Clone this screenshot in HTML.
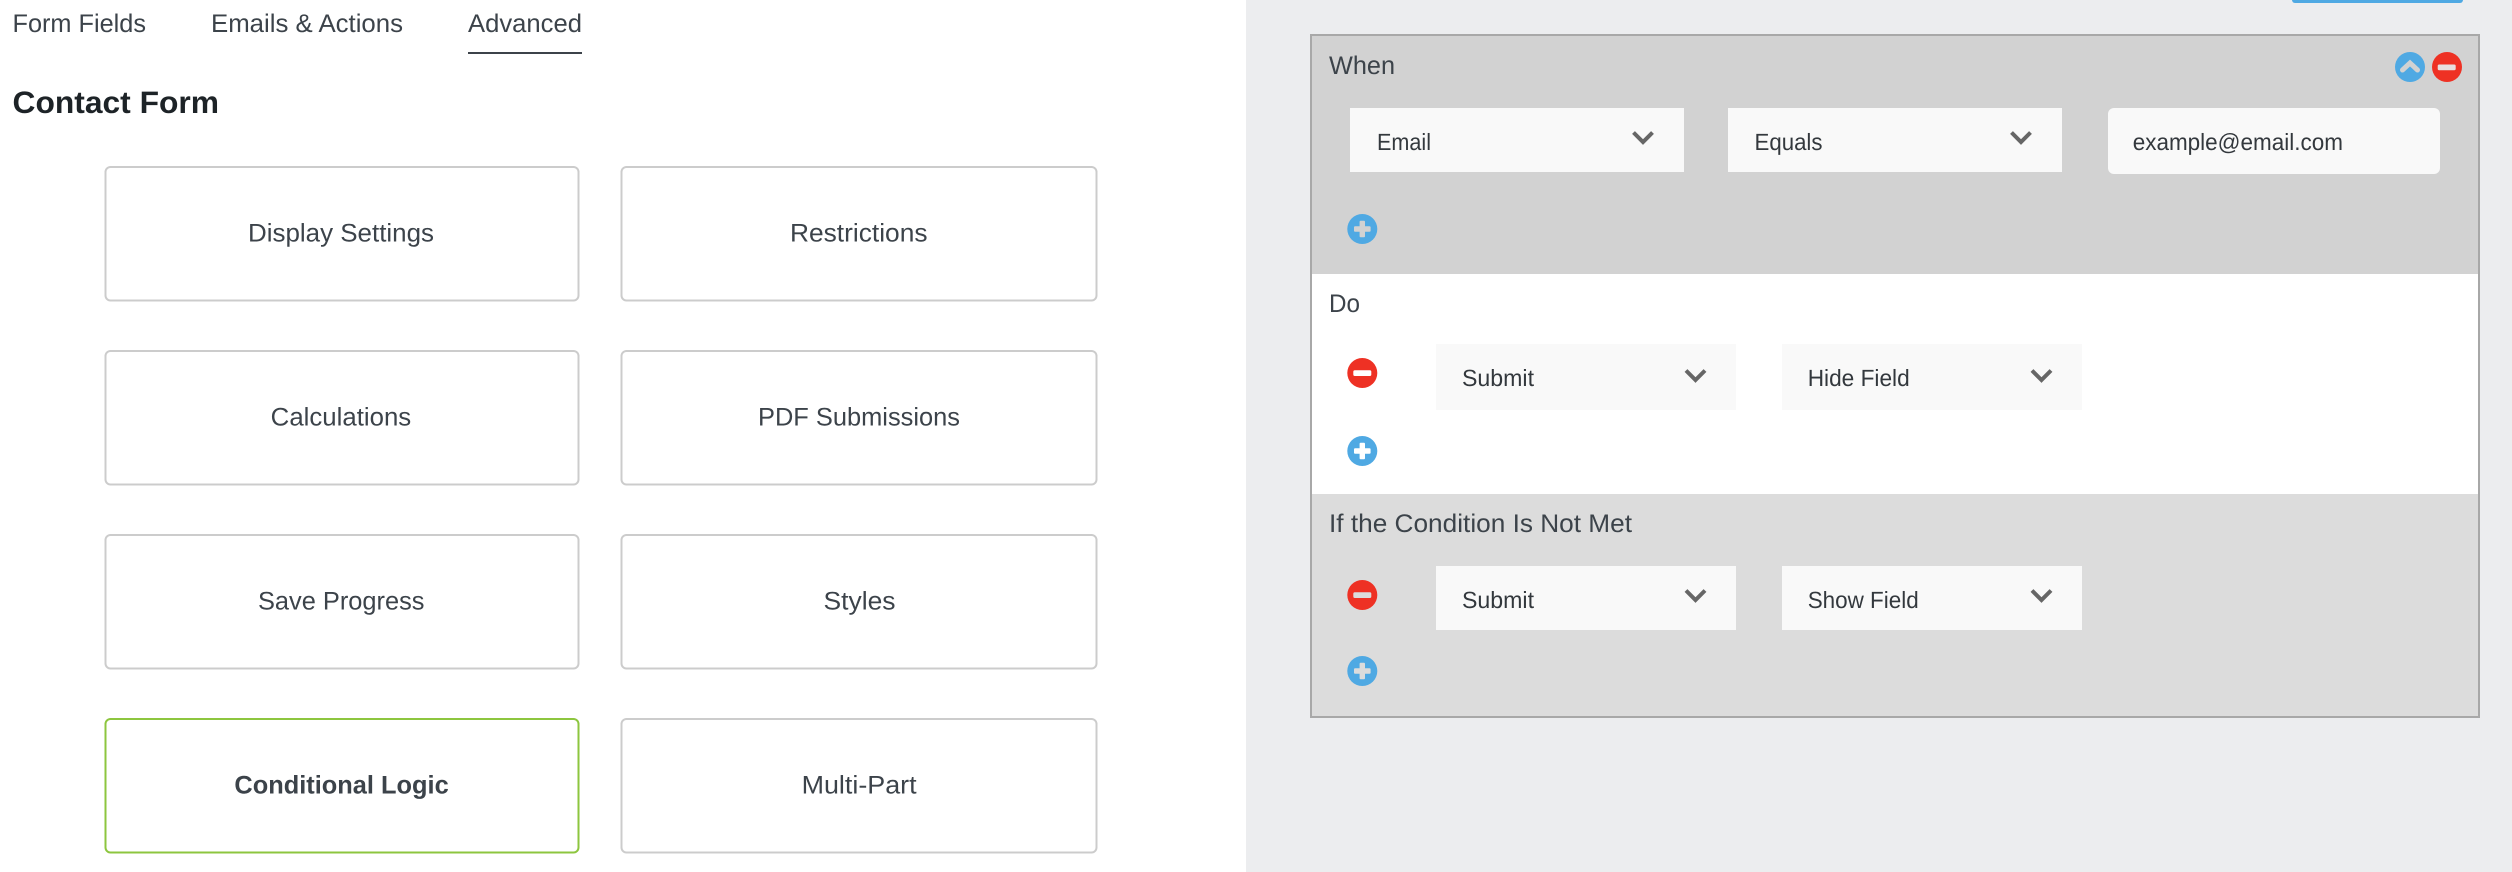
<!DOCTYPE html>
<html><head><meta charset="utf-8"><title>Contact Form</title>
<style>
html,body{margin:0;padding:0;width:2512px;height:872px;overflow:hidden;background:#fff}
svg{display:block}
text{font-family:"Liberation Sans",sans-serif;fill:#3c434a;font-size:25.500px;text-rendering:geometricPrecision}
.s{font-size:23.500px;fill:#33383d}
.c{fill:none;stroke:#666;stroke-width:4}
</style></head><body>
<svg xmlns="http://www.w3.org/2000/svg" width="2512" height="872" viewBox="0 0 2512 872">
<rect x="1246" y="0" width="1266" height="872" fill="#ecedef"/>
<path d="M2292 0h171v0a3 3 0 0 1-3 3h-165a3 3 0 0 1-3-3z" fill="#4fa9e3"/>

<text x="12.500" y="32" textLength="133.500" lengthAdjust="spacingAndGlyphs">Form Fields</text>
<text x="211" y="32" textLength="192" lengthAdjust="spacingAndGlyphs">Emails &amp; Actions</text>
<text x="468" y="32" textLength="114" lengthAdjust="spacingAndGlyphs">Advanced</text>
<rect x="468" y="52" width="114" height="2" fill="#3c434a"/>
<text x="12.500" y="113" textLength="206.500" lengthAdjust="spacingAndGlyphs" style="font-size:31px;font-weight:700;fill:#1d2327">Contact Form</text>

<g fill="#fff" stroke="#ccc" stroke-width="2">
<rect x="105.500" y="167" width="473" height="133.500" rx="5"/>
<rect x="621.500" y="167" width="475" height="133.500" rx="5"/>
<rect x="105.500" y="351" width="473" height="133.500" rx="5"/>
<rect x="621.500" y="351" width="475" height="133.500" rx="5"/>
<rect x="105.500" y="535" width="473" height="133.500" rx="5"/>
<rect x="621.500" y="535" width="475" height="133.500" rx="5"/>
<rect x="105.500" y="719" width="473" height="133.500" rx="5" stroke="#8dc63f"/>
<rect x="621.500" y="719" width="475" height="133.500" rx="5"/>
</g>
<text x="248" y="241.500" textLength="186" lengthAdjust="spacingAndGlyphs">Display Settings</text>
<text x="790" y="241.500" textLength="137.500" lengthAdjust="spacingAndGlyphs">Restrictions</text>
<text x="270.700" y="425.500" textLength="140.500" lengthAdjust="spacingAndGlyphs">Calculations</text>
<text x="758" y="425.500" textLength="202" lengthAdjust="spacingAndGlyphs">PDF Submissions</text>
<text x="258" y="609.500" textLength="166.500" lengthAdjust="spacingAndGlyphs">Save Progress</text>
<text x="823.500" y="609.500" textLength="72" lengthAdjust="spacingAndGlyphs">Styles</text>
<text x="234.400" y="793.500" textLength="214.300" lengthAdjust="spacingAndGlyphs" style="font-weight:700">Conditional Logic</text>
<text x="801.600" y="793.500" textLength="115" lengthAdjust="spacingAndGlyphs">Multi-Part</text>

<rect x="1311" y="35" width="1168" height="682" fill="#d2d2d2" stroke="#a8a8a8" stroke-width="2"/>
<rect x="1312" y="274" width="1166" height="220" fill="#fff"/>
<rect x="1312" y="494" width="1166" height="222" fill="#dcdcdc"/>

<text x="1329" y="74" textLength="66" lengthAdjust="spacingAndGlyphs">When</text>
<text x="1329" y="312" textLength="31" lengthAdjust="spacingAndGlyphs">Do</text>
<text x="1329" y="532" textLength="303" lengthAdjust="spacingAndGlyphs">If the Condition Is Not Met</text>

<rect x="1350" y="108" width="334" height="64" fill="#f9f9f9"/>
<rect x="1728" y="108" width="334" height="64" fill="#f9f9f9"/>
<rect x="2108" y="108" width="332" height="66" rx="6" fill="#f9f9f9"/>
<rect x="1436" y="344" width="300" height="66" fill="#f9f9f9"/>
<rect x="1782" y="344" width="300" height="66" fill="#f9f9f9"/>
<rect x="1436" y="566" width="300" height="64" fill="#f9f9f9"/>
<rect x="1782" y="566" width="300" height="64" fill="#f9f9f9"/>

<text class="s" x="1377" y="150" textLength="54" lengthAdjust="spacingAndGlyphs">Email</text>
<text class="s" x="1754.500" y="150" textLength="68" lengthAdjust="spacingAndGlyphs">Equals</text>
<text class="s" x="2132.700" y="150" textLength="210.300" lengthAdjust="spacingAndGlyphs">example@email.com</text>
<text class="s" x="1462" y="386" textLength="72" lengthAdjust="spacingAndGlyphs">Submit</text>
<text class="s" x="1807.700" y="386" textLength="102" lengthAdjust="spacingAndGlyphs">Hide Field</text>
<text class="s" x="1462" y="608" textLength="72" lengthAdjust="spacingAndGlyphs">Submit</text>
<text class="s" x="1807.700" y="608" textLength="111" lengthAdjust="spacingAndGlyphs">Show Field</text>

<path class="c" d="M1633.500 132.500l9.500 9.500 9.500-9.500"/>
<path class="c" d="M2011.500 132.500l9.500 9.500 9.500-9.500"/>
<path class="c" d="M1686 370.500l9.500 9.500 9.500-9.500"/>
<path class="c" d="M2032 370.500l9.500 9.500 9.500-9.500"/>
<path class="c" d="M1686 590.500l9.500 9.500 9.500-9.500"/>
<path class="c" d="M2032 590.500l9.500 9.500 9.500-9.500"/>

<circle cx="2410" cy="67" r="15" fill="#4fa9e3"/>
<path d="M2402.500 70l7.500-7 7.500 7" fill="none" stroke="#d2d2d2" stroke-width="5" stroke-linecap="round" stroke-linejoin="miter"/>
<circle cx="2447" cy="67" r="15" fill="#ee3124"/>
<rect x="2437.700" y="64.500" width="18" height="5.800" rx="1.500" fill="#e8dede"/>

<circle cx="1362.300" cy="229" r="15" fill="#4fa9e3"/>
<rect x="1354" y="226.300" width="16.600" height="5.400" rx="1" fill="#d2d2d2"/><rect x="1359.600" y="220.700" width="5.400" height="16.600" rx="1" fill="#d2d2d2"/>

<circle cx="1362.300" cy="373" r="15" fill="#ee3124"/>
<rect x="1353.300" y="370.200" width="18" height="5.800" rx="1.500" fill="#fff"/>
<circle cx="1362.300" cy="451" r="15" fill="#4fa9e3"/>
<rect x="1354" y="448.300" width="16.600" height="5.400" rx="1" fill="#fff"/><rect x="1359.600" y="442.700" width="5.400" height="16.600" rx="1" fill="#fff"/>

<circle cx="1362.300" cy="595" r="15" fill="#ee3124"/>
<rect x="1353.300" y="592.200" width="18" height="5.800" rx="1.500" fill="#dcdcdc"/>
<circle cx="1362.300" cy="671" r="15" fill="#4fa9e3"/>
<rect x="1354" y="668.300" width="16.600" height="5.400" rx="1" fill="#dcdcdc"/><rect x="1359.600" y="662.700" width="5.400" height="16.600" rx="1" fill="#dcdcdc"/>
</svg>
</body></html>
